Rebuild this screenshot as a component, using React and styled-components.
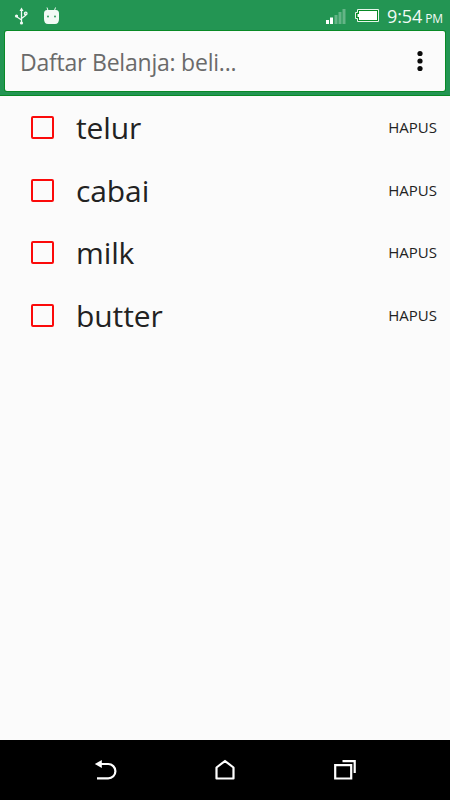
import React from 'react';
import styled, { createGlobalStyle } from 'styled-components';

const GlobalStyle = createGlobalStyle`
	* {
		box-sizing: border-box;
	}

	body {
		margin: 0;
		font-family: 'Open Sans', 'Noto Sans', sans-serif;
	}
`;

const Screen = styled.div`
	display: flex;
	flex-direction: column;
	width: 450px;
	height: 800px;
	background: #fbfbfb;
	overflow: hidden;
`;

const Header = styled.header`
	display: flex;
	flex-direction: column;
	height: 96px;
	background: #239553;
	border-bottom: 1px solid #088a26;
`;

const StatusBar = styled.div`
	display: flex;
	align-items: center;
	justify-content: space-between;
	height: 31px;
	padding: 0 7px 0 12px;
	color: #f2faf5;
`;

const StatusGroup = styled.div`
	display: flex;
	align-items: center;
	gap: ${({ $gap }) => $gap}px;
`;

const Clock = styled.span`
	padding-top: 3px;
	font-size: 18px;
	letter-spacing: -0.1px;
	line-height: 30px;
	white-space: nowrap;
`;

const Meridiem = styled.small`
	margin-left: 3px;
	font-size: 12px;
`;

const TitleCard = styled.div`
	display: flex;
	align-items: center;
	justify-content: space-between;
	height: 60px;
	margin: 0 5px;
	padding: 0 22px 0 15px;
	background: #fbfbfb;
	border-radius: 2px;
	box-shadow: 0 0 0 1px #088a26;
`;

const Title = styled.h1`
	margin: 0;
	padding-top: 1px;
	color: #6a6a6a;
	font-size: 23px;
	font-weight: 400;
	letter-spacing: -0.22px;
	line-height: 60px;
`;

const MenuButton = styled.button`
	display: flex;
	padding: 0;
	background: none;
	border: 0;
`;

const List = styled.ul`
	flex: 1;
	margin: 0;
	padding: 0;
	list-style: none;
`;

const Item = styled.li`
	display: flex;
	align-items: center;
	height: 62.5px;
	padding: 0 13px 0 31px;
`;

const CheckBox = styled.span`
	width: 23px;
	height: 23px;
	margin-top: 1px;
	border: 2px solid #fb0a0a;
	border-radius: 2px;
`;

const ItemName = styled.span`
	flex: 1;
	margin-left: 22px;
	padding-top: 2px;
	color: #222;
	font-size: 30px;
	letter-spacing: -0.1px;
	line-height: 62px;
`;

const DeleteButton = styled.button`
	padding: 0;
	background: none;
	border: 0;
	color: #222;
	font-family: inherit;
	font-size: 15px;
`;

const NavBar = styled.nav`
	display: flex;
	align-items: center;
	justify-content: center;
	gap: 90px;
	height: 60px;
	background: #000;
`;

const UsbIcon = () => (
	<svg width="18" height="20" viewBox="12 6 18 20" fill="none" stroke="#f2faf5" strokeWidth="1.3">
		<path d="M21.5 10v12M21.5 20l-4.5-3v-2M21.5 18.5l4-3v-2" />
		<path d="M19.5 11l2-3.5 2 3.500z" fill="#f2faf5" stroke="none" />
		<circle cx="21.5" cy="23" r="1.6" fill="#f2faf5" stroke="none" />
		<circle cx="16.5" cy="16" r="1.6" fill="#f2faf5" stroke="none" />
		<circle cx="25.7" cy="13.5" r="1.3" />
	</svg>
);

const AndroidIcon = () => (
	<svg width="18" height="20" viewBox="42 5 18 20" fill="#f2faf5">
		<path d="M48 9.500l-1-3M54.500 9.500l1-3" stroke="#f2faf5" />
		<path d="M47 9h9q3 0 3 3.500V18q0 5-4 5h-7q-4 0-4-5v-5.500q0-3.500 3-3.500z" />
		<circle cx="48" cy="15.5" r="0.9" fill="#239553" />
		<circle cx="55" cy="15.5" r="0.9" fill="#239553" />
	</svg>
);

const SignalIcon = () => (
	<svg width="22" height="18" viewBox="326 7 22 18" fill="#fff">
		<path d="M327 20h3v4h-3zM331 17.500h3V24h-3z" />
		<path d="M335.500 15h3v9h-3zM339.500 12h3v12h-3zM343.500 9h3v15h-3z" opacity="0.3" />
	</svg>
);

const BatteryIcon = () => (
	<svg width="26" height="16" viewBox="354 8 26 16">
		<path d="M357.500 9.500h21v12h-21v-3h-2v-6h2z" fill="#088a26" stroke="#e8f6ec" />
		<path d="M359 11h18v9h-18v-3h-1.500v-3h1.500z" fill="#fff" />
	</svg>
);

const MoreIcon = () => (
	<svg width="6" height="22" viewBox="0 0 6 22" fill="#0a0a0a">
		<circle cx="3" cy="3.5" r="2.6" />
		<circle cx="3" cy="11" r="2.6" />
		<circle cx="3" cy="18.5" r="2.6" />
	</svg>
);

const NavIcon = ({ x, children }) => (
	<svg width="30" height="30" viewBox={`${x} 755 30 30`} fill="none" stroke="#fff" strokeWidth="2.2">
		{children}
	</svg>
);

const items = ['telur', 'cabai', 'milk', 'butter'];

const App = () => {
	return (
		<Screen>
			<GlobalStyle />
			<Header>
				<StatusBar>
					<StatusGroup $gap={12}>
						<UsbIcon />
						<AndroidIcon />
					</StatusGroup>
					<StatusGroup $gap={7}>
						<SignalIcon />
						<BatteryIcon />
						<Clock>
							9:54
							<Meridiem>PM</Meridiem>
						</Clock>
					</StatusGroup>
				</StatusBar>
				<TitleCard>
					<Title>Daftar Belanja: beli...</Title>
					<MenuButton aria-label="Menu">
						<MoreIcon />
					</MenuButton>
				</TitleCard>
			</Header>
			<List>
				{items.map((name) => (
					<Item key={name}>
						<CheckBox />
						<ItemName>{name}</ItemName>
						<DeleteButton>HAPUS</DeleteButton>
					</Item>
				))}
			</List>
			<NavBar>
				<NavIcon x={90}>
					<path d="M100 764h8.200a7.200 7.200 0 0 1 0 14.400H97" />
					<path d="M94.800 764l7-4v8z" fill="#fff" stroke="none" />
				</NavIcon>
				<NavIcon x={210}>
					<path d="M216.500 778.500v-11l8.500-6.500 8.500 6.500v11z" strokeLinejoin="round" />
				</NavIcon>
				<NavIcon x={330}>
					<path d="M335.200 765.200h16v13.300h-16zM342.500 761.200h12.200V773" />
				</NavIcon>
			</NavBar>
		</Screen>
	);
};

export default App;
